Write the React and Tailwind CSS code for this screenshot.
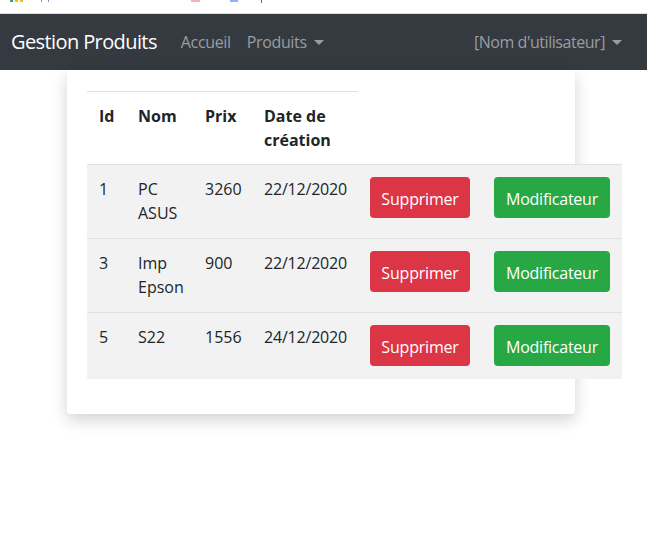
import { useState } from 'react';

const PRODUITS = [
  { id: 1, nom: 'PC ASUS', prix: 3260, date: '22/12/2020' },
  { id: 3, nom: 'Imp Epson', prix: 900, date: '22/12/2020' },
  { id: 5, nom: 'S22', prix: 1556, date: '24/12/2020' },
];

function Caret() {
  return <span className="inline-block ml-[7px] align-[3px] border-t-[5px] border-x-[5px] border-x-transparent border-t-current" />;
}

export default function App() {
  const [produits, setProduits] = useState(PRODUITS);

  return (
    <div className="min-h-[537px] bg-white text-[#212529] text-[16px] leading-6" style={{ fontFamily: '"Open Sans", "Noto Sans", sans-serif' }}>
      {/* browser bookmark strip remnants */}
      <div className="h-[14px] border-b border-[#dadce0] flex items-start">
        <span className="ml-[10px] w-[3px] h-[2px] bg-[#34a853]" />
        <span className="ml-[2px] w-[3px] h-[2px] bg-[#fbbc05]" />
        <span className="ml-[2px] w-[3px] h-[2px] bg-[#fbbc05]" />
        <span className="ml-[18px] w-[1px] h-[2px] bg-[#8a8fc0]" />
        <span className="ml-[6px] w-[1px] h-[2px] bg-[#8a8fc0]" />
        <span className="ml-[142px] w-[9px] h-[2px] bg-[#f6b3b3]" />
        <span className="ml-[30px] w-[8px] h-[2px] bg-[#8ab4f8]" />
        <span className="ml-[23px] w-[1px] h-[3px] bg-[#c05050]" />
      </div>

      {/* Navbar */}
      <nav className="h-[56px] bg-[#343a40] flex items-center pl-[11px] pr-[25px] tracking-[-0.35px]">
        <span className="text-white text-[20px] mr-[24px] tracking-[-0.6px]">Gestion Produits</span>
        <span className="text-[#9a9da0] mr-[16px]">Accueil</span>
        <span className="text-[#9a9da0]">Produits<Caret /></span>
        <span className="ml-auto text-[#9a9da0] tracking-[-0.45px]">[Nom d'utilisateur]<Caret /></span>
      </nav>

      {/* Card */}
      <div className="ml-[67px] w-[508px] rounded bg-white shadow-[0_6px_16px_rgba(0,0,0,0.18)] pt-[21px] pl-[20px] pb-[35px]">
        <table className="table-fixed border-collapse w-[535px]">
          <colgroup>
            <col className="w-[39px]" />
            <col className="w-[67px]" />
            <col className="w-[59px]" />
            <col className="w-[106px]" />
            <col className="w-[124px]" />
            <col className="w-[140px]" />
          </colgroup>
          <thead>
            <tr>
              {['Id', 'Nom', 'Prix', 'Date de création'].map((h) => (
                <th key={h} className="text-left align-top font-bold p-3 border-t border-[#dee2e6]">{h}</th>
              ))}
            </tr>
          </thead>
          <tbody>
            {produits.map((p) => (
              <tr key={p.id} className="bg-[#f2f2f2]">
                <td className="align-top px-3 pt-3 pb-[13px] border-t border-[#dee2e6]">{p.id}</td>
                <td className="align-top px-3 pt-3 pb-[13px] border-t border-[#dee2e6]">{p.nom}</td>
                <td className="align-top px-3 pt-3 pb-[13px] border-t border-[#dee2e6]">{p.prix}</td>
                <td className="align-top px-3 pt-3 pb-[13px] border-t border-[#dee2e6] whitespace-nowrap tracking-[-0.2px]">{p.date}</td>
                <td className="align-top px-3 pt-3 pb-[13px] border-t border-[#dee2e6]">
                  <button
                    onClick={() => setProduits(produits.filter((x) => x.id !== p.id))}
                    className="w-[100px] h-[41px] rounded bg-[#dc3545] text-white pt-[2px] tracking-[-0.2px]"
                  >
                    Supprimer
                  </button>
                </td>
                <td className="align-top px-3 pt-3 pb-[13px] border-t border-[#dee2e6]">
                  <button className="w-[116px] h-[41px] rounded bg-[#28a745] text-white pt-[2px] tracking-[-0.25px]">
                    Modificateur
                  </button>
                </td>
              </tr>
            ))}
          </tbody>
        </table>
      </div>
    </div>
  );
}
